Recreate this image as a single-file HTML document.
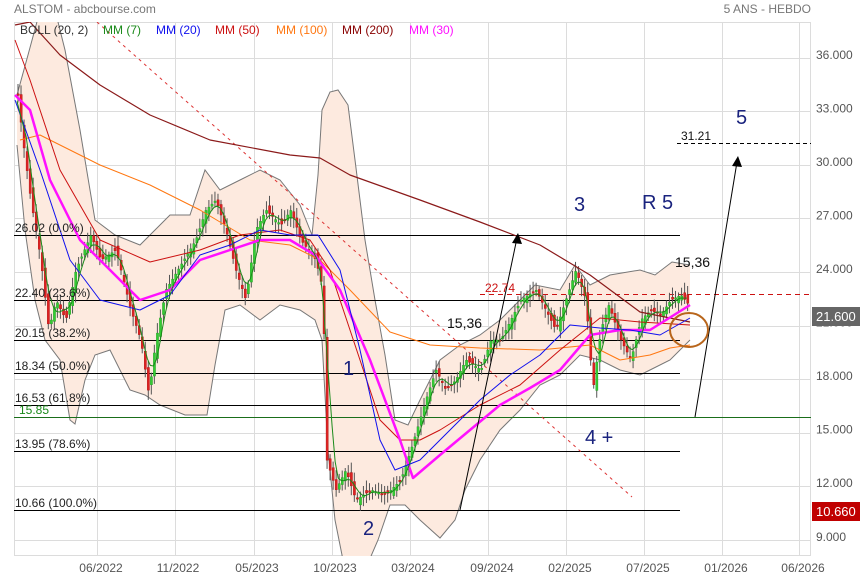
<!DOCTYPE html>
<html><head><meta charset="utf-8">
<style>
html,body{margin:0;padding:0;background:#fff;}
body{width:860px;height:580px;overflow:hidden;position:relative;font-family:"Liberation Sans",sans-serif;}
svg{position:absolute;left:0;top:0;}
</style></head><body>
<svg id="s" width="860" height="580" viewBox="0 0 860 580" font-family="Liberation Sans, sans-serif">
<defs><clipPath id="c"><rect x="14" y="22" width="797" height="534"/></clipPath></defs>
<text x="14" y="13" font-size="12" fill="#777">ALSTOM - abcbourse.com</text>
<text x="811" y="13" font-size="12" fill="#777" text-anchor="end">5 ANS - HEBDO</text>
<g id="grid" stroke="#dcdcdc" stroke-width="1"></g>
<rect x="14.5" y="22.5" width="796" height="533" fill="none" stroke="#dcdcdc"/>
<g clip-path="url(#c)" id="plot"></g>
<g font-size="12" fill="#333" id="labels">
<text x="20" y="34">BOLL (20, 2)</text>
<text x="103" y="34" fill="#1a8a1a">MM (7)</text>
<text x="156" y="34" fill="#1010ee">MM (20)</text>
<text x="215" y="34" fill="#cc1111">MM (50)</text>
<text x="276" y="34" fill="#ff7711">MM (100)</text>
<text x="342" y="34" fill="#880000">MM (200)</text>
<text x="409" y="34" fill="#ff11ff">MM (30)</text>
</g>
</svg>
<script>
(function(){
var NS="http://www.w3.org/2000/svg";
function el(p,t,a,txt){var e=document.createElementNS(NS,t);for(var k in a)e.setAttribute(k,a[k]);if(txt!=null)e.textContent=txt;p.appendChild(e);return e;}
var s=document.getElementById('s'),g=document.getElementById('grid'),P=document.getElementById('plot');
[97,175,254,332,410,488,566,644,722,799].forEach(function(x){el(g,'line',{x1:x+.5,x2:x+.5,y1:22,y2:556});});
var prices=[36,33,30,27,24,21,18,15,12,9];
function py(p){return 272+(24-p)*17.85;}
prices.forEach(function(p){var y=Math.round(py(p))+.5;el(g,'line',{x1:14,x2:811,y1:y,y2:y});
 el(s,'text',{x:816,y:py(p)+1,'font-size':12,fill:'#555'},p.toFixed(3));});
[['06/2022',101],['11/2022',178],['05/2023',257],['10/2023',335],['03/2024',413],['09/2024',492],['02/2025',570],['07/2025',648],['01/2026',726],['06/2026',803]].forEach(function(d){
 el(s,'text',{x:d[1],y:572,'font-size':12,fill:'#555','text-anchor':'middle'},d[0]);});
function pts(a){return a.map(function(p){return p[0]+','+p[1];}).join(' ');}
var up=[[17,95],[28,55],[38,18],[55,10],[65,50],[80,130],[95,220],[115,235],[140,245],[155,230],[170,215],[190,215],[205,170],[220,190],[240,180],[260,170],[280,180],[300,205],[312,235],[318,175],[322,110],[330,92],[338,90],[348,105],[355,160],[365,240],[375,300],[385,355],[395,420],[408,425],[420,400],[440,360],[460,345],[480,335],[500,320],[520,300],[535,285],[560,290],[575,265],[590,285],[610,275],[640,270],[655,275],[672,262],[690,265]];
var lo=[[17,145],[25,230],[35,300],[45,340],[60,360],[70,420],[75,424],[85,380],[95,355],[110,350],[130,390],[145,395],[160,405],[185,415],[207,415],[215,365],[225,310],[240,305],[260,320],[280,305],[300,310],[315,320],[322,340],[328,450],[335,520],[345,570],[365,570],[378,540],[390,505],[405,505],[420,520],[440,538],[455,520],[465,490],[480,460],[500,430],[520,410],[540,385],[560,375],[580,355],[600,360],[620,370],[640,375],[650,370],[670,360],[690,340]];
el(P,'polygon',{points:pts(up.concat(lo.slice().reverse())),fill:'#fdeadf'});
el(P,'polyline',{points:pts(up),fill:'none',stroke:'#777','stroke-width':1});
el(P,'polyline',{points:pts(lo),fill:'none',stroke:'#777','stroke-width':1});
[[235,'26.02  (0.0%)'],[300,'22.40  (23.6%)'],[340,'20.15  (38.2%)'],[373,'18.34  (50.0%)'],[405,'16.53  (61.8%)'],[451,'13.95  (78.6%)'],[510,'10.66  (100.0%)']].forEach(function(f){
 el(P,'line',{x1:14,x2:680,y1:f[0]+.5,y2:f[0]+.5,stroke:'#000','stroke-width':1});
 el(s,'text',{x:15,y:f[0]-3,'font-size':12,fill:'#222'},f[1]);});
el(P,'line',{x1:14,x2:811,y1:417.5,y2:417.5,stroke:'#1a6e1a','stroke-width':1});
el(s,'text',{x:19,y:414,'font-size':12,fill:'#1a8a1a'},'15.85');
el(P,'line',{x1:480,x2:811,y1:294.5,y2:294.5,stroke:'#cc1111','stroke-dasharray':'5,4'});
el(s,'text',{x:485,y:292,'font-size':12,fill:'#cc1111'},'22.74');
el(P,'line',{x1:677,x2:811,y1:143.5,y2:143.5,stroke:'#000','stroke-dasharray':'4,3'});
el(s,'text',{x:681,y:140,'font-size':12,fill:'#111'},'31.21');
el(P,'line',{x1:97,y1:22,x2:632,y2:497,stroke:'#dd3333','stroke-dasharray':'3,4','stroke-width':1});
var path=[[17,95],[22,140],[30,200],[40,260],[48,330],[55,300],[65,320],[75,270],[90,235],[100,260],[115,250],[130,310],[140,340],[148,395],[155,340],[165,290],[180,265],[195,240],[205,210],[215,200],[225,230],[235,270],[245,300],[255,230],[265,210],[280,225],[290,210],[300,240],[315,260],[322,290],[326,460],[335,490],[345,470],[355,500],[370,490],[385,495],[400,480],[410,450],[425,400],[435,370],[445,390],[455,380],[465,360],[480,370],[490,340],[500,340],[510,320],[520,300],[535,290],[545,310],[555,330],[565,300],[575,270],[585,300],[592,390],[600,330],[608,305],[620,340],[630,360],[640,320],[650,310],[660,315],[670,300],[680,295],[688,305]];
function at(x){if(x<=path[0][0])return path[0][1];for(var i=0;i<path.length-1;i++){if(x<=path[i+1][0]){var a=path[i],b=path[i+1];return a[1]+(b[1]-a[1])*(x-a[0])/(b[0]-a[0]);}}return path[path.length-1][1];}
var ma7=[];
for(var x=17;x<=689;x+=3.03){var c=at(x),o=at(x-3.03);var n=Math.sin(x*1.7)*6+Math.sin(x*0.53)*4;o+=n*0.6;
 var hi=Math.min(o,c)-3-Math.abs(Math.sin(x*2.3))*7,lw=Math.max(o,c)+3+Math.abs(Math.cos(x*1.9))*7;
 var green=c<o;
 el(P,'line',{x1:x+1,x2:x+1,y1:hi,y2:lw,stroke:'#555','stroke-width':1});
 el(P,'rect',{x:x,y:Math.min(o,c),width:2.2,height:Math.max(1.5,Math.abs(c-o)),fill:green?'#33cc33':'#dd2222',stroke:green?'#229922':'#aa1111','stroke-width':.4});
 ma7.push([x,(c+o)/2]);}
function line(a,col,w){el(P,'polyline',{points:pts(a),fill:'none',stroke:col,'stroke-width':w,'stroke-linejoin':'round'});}
line([[15,25],[30,22],[60,55],[100,85],[150,115],[210,140],[290,155],[320,158],[350,175],[420,200],[480,222],[540,245],[590,275],[640,312],[690,322]],'#8b1a1a',1.2);
line([[20,140],[40,135],[70,150],[100,165],[150,185],[200,210],[250,240],[290,245],[320,260],[350,290],[390,332],[430,345],[480,348],[540,350],[590,345],[620,360],[650,355],[670,348],[690,345]],'#ff7711',1);
line([[15,40],[30,80],[60,170],[100,240],[150,262],[200,250],[240,235],[280,230],[310,240],[330,270],[360,360],[380,420],[400,440],[420,440],[440,430],[480,405],[520,385],[560,350],[600,318],[640,322],[690,325]],'#cc1111',1);
line([[15,95],[30,110],[50,180],[80,240],[110,270],[140,300],[170,290],[200,260],[230,250],[260,240],[290,240],[315,255],[340,290],[370,360],[400,440],[413,478],[440,455],[470,430],[500,405],[530,388],[560,370],[590,335],[620,330],[650,330],[690,305]],'#ff11ff',2.5);
line([[15,100],[40,170],[70,260],[100,300],[120,305],[140,310],[170,295],[200,255],[230,245],[260,230],[290,235],[318,235],[340,270],[360,350],[380,440],[395,470],[420,460],[450,430],[480,400],[510,375],[540,355],[570,325],[600,328],[630,330],[660,335],[690,318]],'#1010ee',1);
var sm=[];for(var i=0;i<ma7.length;i++){var a=0,k=0;for(var j=Math.max(0,i-3);j<=Math.min(ma7.length-1,i+1);j++){a+=ma7[j][1];k++;}sm.push([ma7[i][0],a/k]);}
line(sm,'#1a8a1a',1);
el(P,'line',{x1:460,y1:510,x2:517,y2:238,stroke:'#000','stroke-width':1});
el(P,'polygon',{points:'518,233 512,243 522,244',fill:'#000'});
el(P,'line',{x1:695,y1:417,x2:737,y2:162,stroke:'#000','stroke-width':1});
el(P,'polygon',{points:'738,156 732,166 742,167',fill:'#000'});
el(P,'ellipse',{cx:689,cy:330,rx:19,ry:17,fill:'none',stroke:'#b8651b','stroke-width':2});
var N='#1a237e';
[[736,124,'5',20],[574,211,'3',20],[642,209,'R 5',20],[343,375,'1',20],[363,535,'2',20],[585,444,'4 +',20]].forEach(function(t){el(s,'text',{x:t[0],y:t[1],'font-size':t[3],fill:N},t[2]);});
el(s,'text',{x:447,y:328,'font-size':14,fill:'#111'},'15,36');
el(s,'text',{x:675,y:267,'font-size':14,fill:'#111'},'15,36');
el(s,'rect',{x:812,y:307,width:48,height:19,fill:'#666'});
el(s,'text',{x:816,y:321,'font-size':13,fill:'#fff'},'21.600');
el(s,'rect',{x:812,y:502,width:48,height:19,fill:'#c00000'});
el(s,'text',{x:816,y:516,'font-size':13,fill:'#fff'},'10.660');
s.appendChild(document.getElementById('labels'));
})();
</script>
</body></html>
